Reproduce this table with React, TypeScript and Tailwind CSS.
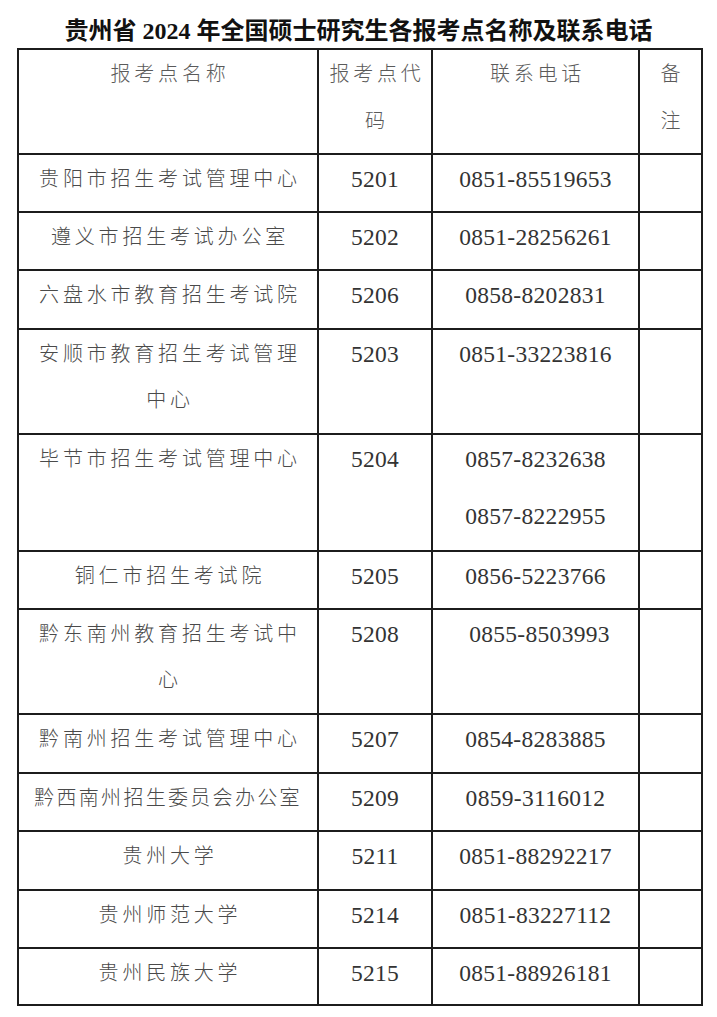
const ROWS = [
  { name: ['贵阳市招生考试管理中心'], code: '5201', phones: ['0851-85519653'], h: 'h-[58px]' },
  { name: ['遵义市招生考试办公室'], code: '5202', phones: ['0851-28256261'], h: 'h-[58px]' },
  { name: ['六盘水市教育招生考试院'], code: '5206', phones: ['0858-8202831'], h: 'h-[59px]' },
  { name: ['安顺市教育招生考试管理', '中心'], code: '5203', phones: ['0851-33223816'], h: 'h-[105px]' },
  { name: ['毕节市招生考试管理中心'], code: '5204', phones: ['0857-8232638', '0857-8222955'], h: 'h-[117px]' },
  { name: ['铜仁市招生考试院'], code: '5205', phones: ['0856-5223766'], h: 'h-[58px]' },
  { name: ['黔东南州教育招生考试中', '心'], code: '5208', phones: ['0855-8503993'], h: 'h-[105px]', shift: true },
  { name: ['黔南州招生考试管理中心'], code: '5207', phones: ['0854-8283885'], h: 'h-[59px]' },
  { name: ['黔西南州招生委员会办公室'], code: '5209', phones: ['0859-3116012'], h: 'h-[58px]', tight: true },
  { name: ['贵州大学'], code: '5211', phones: ['0851-88292217'], h: 'h-[59px]' },
  { name: ['贵州师范大学'], code: '5214', phones: ['0851-83227112'], h: 'h-[58px]' },
  { name: ['贵州民族大学'], code: '5215', phones: ['0851-88926181'], h: 'h-[57px]' },
];

const cell = 'border-2 border-[#1c1c1c] align-top text-center p-0 pt-[1px]';

export default function App() {
  return (
    <div className="w-[717px] min-h-[1017px] bg-white font-[family-name:'Liberation_Serif','Noto_Sans_CJK_SC',serif]">
      {/* Title */}
      <h1 className="pt-[14px] h-[48px] text-center text-[24px] leading-[34px] font-bold text-[#111]">
        贵州省 2024 年全国硕士研究生各报考点名称及联系电话
      </h1>

      <table className="ml-[17px] w-[684px] table-fixed border-collapse">
        <colgroup>
          <col className="w-[300px]" />
          <col className="w-[114px]" />
          <col className="w-[207px]" />
          <col className="w-[63px]" />
        </colgroup>
        <thead>
          <tr className="h-[105px] text-[20px] leading-[47px] font-light text-[#5a5a5a]">
            <th className={`${cell} font-light tracking-[3.8px] pl-[4px]`}>报考点名称</th>
            <th className={`${cell} font-light tracking-[3.8px] pl-[4px]`}>
              <div>报考点代</div>
              <div>码</div>
            </th>
            <th className={`${cell} font-light tracking-[3.8px] pl-[4px]`}>联系电话</th>
            <th className={`${cell} font-light`}>
              <div>备</div>
              <div>注</div>
            </th>
          </tr>
        </thead>
        <tbody>
          {ROWS.map((row) => (
            <tr key={row.code} className={row.h}>
              <td
                className={`${cell} text-[20px] leading-[46px] font-light text-[#4a4a4a] whitespace-nowrap ${
                  row.tight ? 'tracking-[2.3px]' : 'tracking-[3.8px] pl-[4px]'
                }`}
              >
                {row.name.map((line) => (
                  <div key={line}>{line}</div>
                ))}
              </td>
              <td className={`${cell} text-[23.5px] leading-[46px] tracking-[0.2px] text-[#333]`}>{row.code}</td>
              <td
                className={`${cell} text-[23.5px] leading-[46px] tracking-[0.3px] text-[#333] ${
                  row.shift ? 'pl-[8px]' : ''
                }`}
              >
                <div className="flex flex-col gap-[11px]">
                  {row.phones.map((p) => (
                    <div key={p}>{p}</div>
                  ))}
                </div>
              </td>
              <td className={cell}></td>
            </tr>
          ))}
        </tbody>
      </table>
    </div>
  );
}
